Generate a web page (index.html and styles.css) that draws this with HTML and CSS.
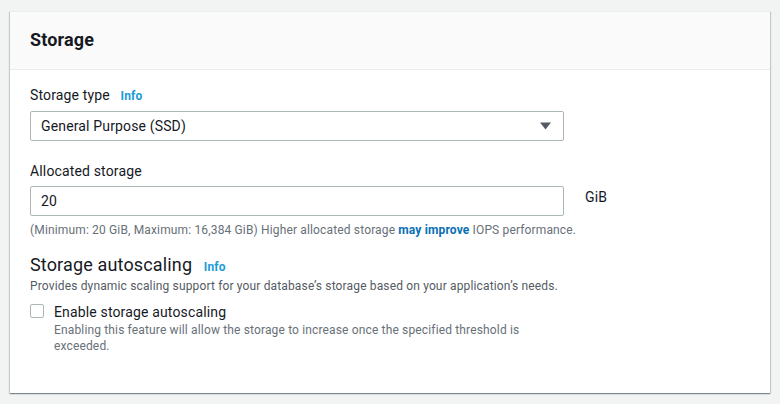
FILE: index.html
```html
<!DOCTYPE html>
<html lang="en">
<head>
<meta charset="utf-8">
<title>Storage</title>
<link rel="stylesheet" href="styles.css">
</head>
<body>
<section class="card">
  <header class="card-header"><h2>Storage</h2></header>
  <div class="card-body">
    <div class="field">
      <div class="label">Storage type <a class="info" href="#">Info</a></div>
      <div class="select">
        <span>General Purpose (SSD)</span>
        <svg class="caret" width="11" height="8" viewBox="0 0 11 8"><path d="M0 0.5h11L5.5 7.5z" fill="#545b64"/></svg>
      </div>
    </div>
    <div class="field">
      <div class="label">Allocated storage</div>
      <div class="input-row">
        <div class="input">20</div>
        <span class="unit">GiB</span>
      </div>
      <div class="hint">(Minimum: 20 GiB, Maximum: 16,384 GiB) Higher allocated storage <a class="link" href="#">may improve</a> IOPS performance.</div>
    </div>
    <div class="sub">
      <h3>Storage autoscaling <a class="info" href="#">Info</a></h3>
      <div class="desc">Provides dynamic scaling support for your database’s storage based on your application’s needs.</div>
      <label class="check">
        <span class="box"></span>
        <span class="check-text">
          <span class="check-label">Enable storage autoscaling</span>
          <span class="check-desc">Enabling this feature will allow the storage to increase once the specified threshold is exceeded.</span>
        </span>
      </label>
    </div>
  </div>
</section>
</body>
</html>
```
FILE: styles.css
```css
* { box-sizing: border-box; }
body {
  margin: 0;
  background: #f2f3f3;
  font-family: Roboto, "Liberation Sans", sans-serif;
  color: #16191f;
  padding: 11px 10px;
  letter-spacing: 0.15px;
}
.card {
  background: #fff;
  width: 760px;
  height: 382px;
  box-shadow: 0 1px 1px 0 rgba(0,28,36,.3), 1px 1px 1px 0 rgba(0,28,36,.15), -1px 1px 1px 0 rgba(0,28,36,.15);
  border-top: 1px solid #eaeded;
}
.card-header {
  background: #fafafa;
  border-bottom: 1px solid #eaeded;
  height: 58px;
  padding: 0 20px;
  display: flex;
  align-items: center;
}
.card-header h2 {
  margin: -2px 0 0;
  font-size: 18px;
  font-weight: 700;
  line-height: 22px;
}
.card-body { padding: 15px 20px 0; }
.field { margin-bottom: 20px; }
.label {
  font-size: 14px;
  line-height: 20px;
  margin-bottom: 5px;
}
.info {
  color: #1b9bd7;
  font-weight: 700;
  font-size: 12px;
  text-decoration: none;
  margin-left: 7px;
}
.select, .input {
  width: 534px;
  height: 30px;
  border: 1px solid #aab7b8;
  border-radius: 2px;
  padding: 0 10px;
  font-size: 14px;
  display: flex;
  align-items: center;
}
.select { justify-content: space-between; padding-right: 12px; }
.input-row { display: flex; align-items: center; }
.unit { margin-left: 21px; font-size: 14px; margin-top: -8px; }
.hint {
  font-size: 12px;
  line-height: 16px;
  color: #687078;
  margin-top: 6px;
}
.link { color: #0a6fb5; font-weight: 700; text-decoration: none; }
.field + .sub { margin-top: -4px; }
.sub h3 {
  margin: 0;
  font-size: 18px;
  font-weight: 400;
  line-height: 22px;
}
.desc {
  font-size: 12px;
  line-height: 16px;
  color: #545b64;
  margin-top: 0;
}
.check { display: flex; margin-top: 8px; }
.box {
  width: 14px;
  height: 14px;
  border: 1px solid #aab7b8;
  border-radius: 2px;
  margin-top: 2px;
  flex: none;
}
.check-text { display: flex; flex-direction: column; margin-left: 10px; width: 480px; }
.check-label { font-size: 14px; line-height: 20px; }
.check-desc { font-size: 12px; line-height: 16px; color: #687078; }
```
